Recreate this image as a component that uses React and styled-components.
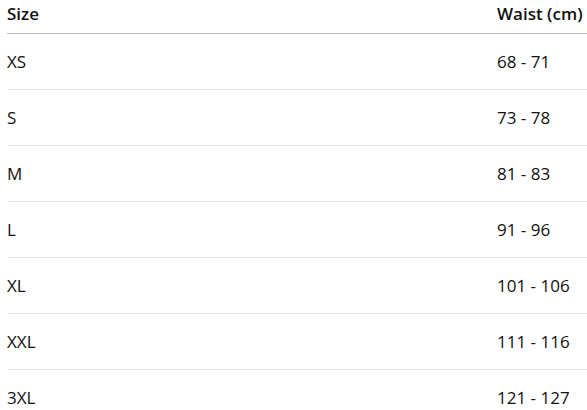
import React from "react";
import styled, { createGlobalStyle } from "styled-components";

const sizes = [
	["XS", "68 - 71"],
	["S", "73 - 78"],
	["M", "81 - 83"],
	["L", "91 - 96"],
	["XL", "101 - 106"],
	["XXL", "111 - 116"],
	["3XL", "121 - 127"],
];

const App = () => {
	return (
		<>
			<GlobalStyle />
			<Table>
				<HeadRow>
					<Cell>Size</Cell>
					<Cell>Waist (cm)</Cell>
				</HeadRow>
				{sizes.map(([size, waist]) => (
					<Row key={size}>
						<Cell>{size}</Cell>
						<Cell>{waist}</Cell>
					</Row>
				))}
			</Table>
		</>
	);
};

export default App;

const GlobalStyle = createGlobalStyle`
	* {
		box-sizing: border-box;
	}
	body {
		margin: 0;
		background: #fff;
		font-family: "Open Sans", "Noto Sans", sans-serif;
		color: #111;
	}
`;

const Table = styled.div`
	margin-left: 7px;
	display: flex;
	flex-direction: column;
`;

const HeadRow = styled.div`
	display: grid;
	grid-template-columns: 490px 1fr;
	align-items: center;
	height: 34px;
	border-bottom: 1px solid #bdbdbd;
	font-weight: 600;
	padding-bottom: 5px;
`;

const Row = styled.div`
	display: grid;
	grid-template-columns: 490px 1fr;
	align-items: center;
	height: 56px;
	border-bottom: 1px solid #e6e6e6;
	padding-top: 1px;
`;

const Cell = styled.div`
	font-size: 17px;
	line-height: 22px;
	white-space: nowrap;
`;
